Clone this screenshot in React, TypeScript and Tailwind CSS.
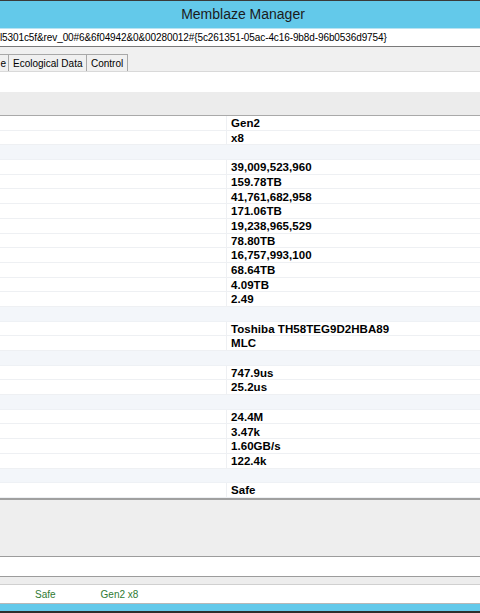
import React from "react";

const G = null;

const values: (string | null)[] = [
  "Gen2",
  "x8",
  G,
  "39,009,523,960",
  "159.78TB",
  "41,761,682,958",
  "171.06TB",
  "19,238,965,529",
  "78.80TB",
  "16,757,993,100",
  "68.64TB",
  "4.09TB",
  "2.49",
  G,
  "Toshiba TH58TEG9D2HBA89",
  "MLC",
  G,
  "747.9us",
  "25.2us",
  G,
  "24.4M",
  "3.47k",
  "1.60GB/s",
  "122.4k",
  G,
  "Safe",
];

const ui = { fontFamily: '"Liberation Sans", Arial, sans-serif' };

// one property row of the list view
const Row = ({ value }: { value: string | null }) => {
  if (value === null) {
    return <div className="h-[14.7px] bg-[#f3f6fa] border-b border-[#eef1f5]" />;
  }
  return (
    <div className="h-[14.7px] flex border-b border-[#eef0f3] bg-white">
      <div className="w-[227px] shrink-0 border-r border-[#eef0f3]" />
      <div className="pl-[4px] pt-[2px] flex items-center text-[11.5px] font-bold tracking-[0.05px] text-black leading-none whitespace-nowrap">
        {value}
      </div>
    </div>
  );
};

export default function App() {
  return (
    <div className="w-[480px] h-[613px] overflow-hidden flex flex-col bg-[#f0f0f0]" style={ui}>
      {/* title bar */}
      <div className="h-[29px] shrink-0 bg-[#63c9ea] border-t border-[#3a3a3a] border-b border-b-[#b9e3f2] flex items-center justify-center">
        <span className="text-[14px] text-[#1b1b1b] pl-[6px]">Memblaze Manager</span>
      </div>

      {/* device path */}
      <div className="h-[18px] shrink-0 bg-white border-b border-[#7a7a7a] flex items-center overflow-hidden">
        <span className="text-[10px] text-black whitespace-nowrap tracking-[-0.1px]">
          l5301c5f&amp;rev_00#6&amp;6f04942&amp;0&amp;00280012#{"{"}5c261351-05ac-4c16-9b8d-96b0536d9754{"}"}
        </span>
      </div>

      {/* tabs */}
      <div className="h-[25px] shrink-0 bg-[#f0f0f0] flex items-end border-b border-[#d9d9d9]">
        <div className="flex h-[17px] text-[10px] text-black">
          <div className="w-[9px] border-t border-r border-[#a8a8a8] bg-[#f0f0f0] flex items-center justify-end pr-[2px]">
            e
          </div>
          <div className="w-[78px] border-t border-r border-[#a8a8a8] bg-[#f0f0f0] flex items-center pl-[4px]">
            Ecological Data
          </div>
          <div className="w-[41px] border-t border-r border-[#a8a8a8] bg-[#f0f0f0] flex items-center pl-[4px]">
            Control
          </div>
        </div>
      </div>

      {/* tab page */}
      <div className="h-[20px] shrink-0 bg-white" />

      {/* list header */}
      <div className="h-[24px] shrink-0 bg-[#ececec] border-b border-[#a9a9a9]" />

      {/* list rows */}
      <div className="shrink-0 flex flex-col">
        {values.map((v, i) => (
          <Row key={i} value={v} />
        ))}
      </div>

      <div className="h-[2px] shrink-0 bg-[#a0a0a0]" />

      {/* lower panel */}
      <div className="h-[57px] shrink-0 bg-[#eeeeee] border-b border-[#9c9c9c]" />
      <div className="h-[20px] shrink-0 bg-white border-b border-[#9c9c9c]" />
      <div className="h-[8px] shrink-0 bg-[#ededed] border-b border-[#d0d0d0]" />

      {/* status bar */}
      <div className="h-[19px] shrink-0 bg-white border-b border-[#b8b8b8] flex items-center pt-[2px] text-[10px] text-[#2f7a33]">
        <span className="ml-[35px]">Safe</span>
        <span className="ml-[45px]">Gen2 x8</span>
      </div>

      <div className="h-[7px] shrink-0 bg-[#63c9ea]" />
      <div className="flex-1 bg-[#2e2e2e]" />
    </div>
  );
}
